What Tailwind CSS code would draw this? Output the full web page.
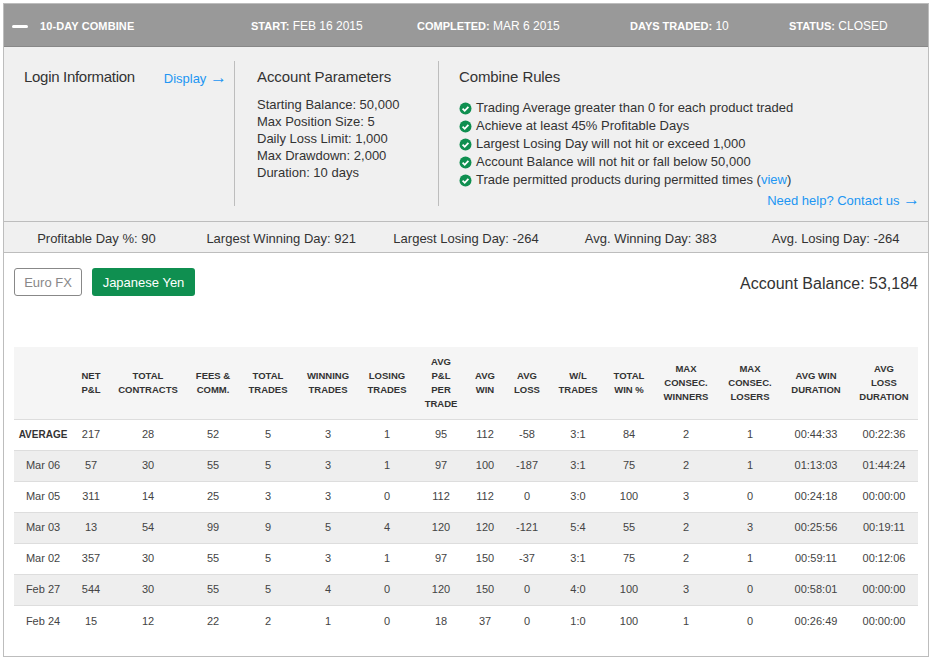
<!DOCTYPE html>
<html lang="en">
<head>
  <meta charset="UTF-8" />
  <title>10-Day Combine</title>
  <script src="https://cdn.jsdelivr.net/npm/@tailwindcss/browser@4"></script>
</head>
<body class="bg-white font-['Liberation_Sans',Arial,sans-serif] text-[#333]">
  <div class="ml-[3px] mt-[3px] w-[926px] h-[654px] border border-[#bdbdbd] box-border">

    <!-- header bar -->
    <div class="h-[43px] pt-[2px] bg-[#999] border-b border-[#888] flex items-center text-white text-[12px] box-border">
      <span class="ml-[8px] w-[16px] h-[3px] rounded-sm bg-white"></span>
      <b class="ml-[12px] w-[211px] text-[11px] tracking-[0.1px]">10-DAY COMBINE</b>
      <span class="w-[166px]"><b class="text-[11px]">START:</b> FEB 16 2015</span>
      <span class="w-[213px]"><b class="text-[11px]">COMPLETED:</b> MAR 6 2015</span>
      <span class="w-[159px]"><b class="text-[11px]">DAYS TRADED:</b> 10</span>
      <span><b class="text-[11px]">STATUS:</b> CLOSED</span>
    </div>

    <!-- info panel -->
    <div class="h-[175px] bg-[#f0f0f0] border-b border-[#bdbdbd] flex pt-[14px] box-border">
      <div class="w-[231px] h-[145px] border-r border-[#bdbdbd] pl-[20px] pr-[7px] flex justify-between items-start box-border">
        <h2 class="text-[15px] leading-[18px] mt-[7px] tracking-[-0.3px]">Login Information</h2>
        <a class="text-[13px] leading-[18px] mt-[8px] text-[#2196f3]">Display <span class="text-[17px] leading-none">→</span></a>
      </div>
      <div class="w-[204px] h-[145px] border-r border-[#bdbdbd] pl-[22px] box-border">
        <h2 class="text-[15px] leading-[18px] mt-[7px] mb-[10px] tracking-[-0.1px]">Account Parameters</h2>
        <div class="text-[13px] leading-[17px]">
          <p>Starting Balance: 50,000</p>
          <p>Max Position Size: 5</p>
          <p>Daily Loss Limit: 1,000</p>
          <p>Max Drawdown: 2,000</p>
          <p>Duration: 10 days</p>
        </div>
      </div>
      <div class="flex-1 pl-[20px] pr-[8px]">
        <h2 class="text-[15px] leading-[18px] mt-[7px] mb-[13px] tracking-[-0.1px]">Combine Rules</h2>
        <ul class="text-[13px] leading-[18px]">
          <li class="flex items-center gap-[4px]">
            <svg width="13" height="13" viewBox="0 0 13 13"><circle cx="6.5" cy="6.5" r="6" fill="#0f8f50"/><path d="M3.6 6.7l2.1 2.1 3.7-3.9" fill="none" stroke="#fff" stroke-width="1.8"/></svg>
            Trading Average greater than 0 for each product traded
          </li>
          <li class="flex items-center gap-[4px]">
            <svg width="13" height="13" viewBox="0 0 13 13"><circle cx="6.5" cy="6.5" r="6" fill="#0f8f50"/><path d="M3.6 6.7l2.1 2.1 3.7-3.9" fill="none" stroke="#fff" stroke-width="1.8"/></svg>
            Achieve at least 45% Profitable Days
          </li>
          <li class="flex items-center gap-[4px]">
            <svg width="13" height="13" viewBox="0 0 13 13"><circle cx="6.5" cy="6.5" r="6" fill="#0f8f50"/><path d="M3.6 6.7l2.1 2.1 3.7-3.9" fill="none" stroke="#fff" stroke-width="1.8"/></svg>
            Largest Losing Day will not hit or exceed 1,000
          </li>
          <li class="flex items-center gap-[4px]">
            <svg width="13" height="13" viewBox="0 0 13 13"><circle cx="6.5" cy="6.5" r="6" fill="#0f8f50"/><path d="M3.6 6.7l2.1 2.1 3.7-3.9" fill="none" stroke="#fff" stroke-width="1.8"/></svg>
            Account Balance will not hit or fall below 50,000
          </li>
          <li class="flex items-center gap-[4px]">
            <svg width="13" height="13" viewBox="0 0 13 13"><circle cx="6.5" cy="6.5" r="6" fill="#0f8f50"/><path d="M3.6 6.7l2.1 2.1 3.7-3.9" fill="none" stroke="#fff" stroke-width="1.8"/></svg>
            <span>Trade permitted products during permitted times (<a class="text-[#2196f3]">view</a>)</span>
          </li>
        </ul>
        <div class="text-right text-[13px] leading-[18px] mt-[2px] text-[#2196f3]"><a>Need help? Contact us <span class="text-[17px] leading-none">→</span></a></div>
      </div>
    </div>

    <!-- summary stats -->
    <div class="h-[31px] pt-[3px] bg-[#f0f0f0] border-b border-[#bdbdbd] grid grid-cols-5 items-center text-center text-[13px] box-border">
      <span>Profitable Day %: 90</span>
      <span>Largest Winning Day: 921</span>
      <span>Largest Losing Day: -264</span>
      <span>Avg. Winning Day: 383</span>
      <span>Avg. Losing Day: -264</span>
    </div>

    <!-- product tabs + balance -->
    <div class="flex items-center justify-between mt-[15px] px-[10px]">
      <div class="flex gap-[10px] text-[13px]">
        <button class="w-[68px] h-[28px] pt-[1px] border border-[#888] rounded-[3px] text-[#888]">Euro FX</button>
        <button class="w-[103px] h-[28px] pt-[1px] rounded-[3px] bg-[#0f8f50] text-white">Japanese Yen</button>
      </div>
      <div class="text-[16px] mt-[4px]">Account Balance: 53,184</div>
    </div>

    <!-- daily table -->
    <table class="mt-[51px] ml-[10px] w-[904px] table-fixed border-collapse text-center text-[11px] text-[#444]">
      <colgroup>
        <col class="w-[58px]"><col class="w-[38px]"><col class="w-[76px]"><col class="w-[54px]">
        <col class="w-[56px]"><col class="w-[64px]"><col class="w-[54px]"><col class="w-[54px]">
        <col class="w-[34px]"><col class="w-[50px]"><col class="w-[52px]"><col class="w-[50px]">
        <col class="w-[64px]"><col class="w-[64px]"><col class="w-[68px]"><col class="w-[68px]">
      </colgroup>
      <thead class="bg-[#f5f5f5] text-[9.5px] leading-[14px] font-bold text-[#333]">
        <tr class="h-[72px] border-b border-[#ddd]">
          <th></th><th>NET<br>P&amp;L</th><th>TOTAL<br>CONTRACTS</th><th>FEES &amp;<br>COMM.</th><th>TOTAL<br>TRADES</th><th>WINNING<br>TRADES</th><th>LOSING<br>TRADES</th><th>AVG<br>P&amp;L<br>PER<br>TRADE</th><th>AVG<br>WIN</th><th>AVG<br>LOSS</th><th>W/L<br>TRADES</th><th>TOTAL<br>WIN %</th><th>MAX<br>CONSEC.<br>WINNERS</th><th>MAX<br>CONSEC.<br>LOSERS</th><th>AVG WIN<br>DURATION</th><th>AVG<br>LOSS<br>DURATION</th>
        </tr>
      </thead>
      <tbody>
        <tr class="h-[31px] border-b border-[#ddd]"><td class="font-bold text-[10px] text-[#333]">AVERAGE</td><td>217</td><td>28</td><td>52</td><td>5</td><td>3</td><td>1</td><td>95</td><td>112</td><td>-58</td><td>3:1</td><td>84</td><td>2</td><td>1</td><td>00:44:33</td><td>00:22:36</td></tr>
        <tr class="h-[31px] border-b border-[#ddd] bg-[#eee]"><td>Mar 06</td><td>57</td><td>30</td><td>55</td><td>5</td><td>3</td><td>1</td><td>97</td><td>100</td><td>-187</td><td>3:1</td><td>75</td><td>2</td><td>1</td><td>01:13:03</td><td>01:44:24</td></tr>
        <tr class="h-[31px] border-b border-[#ddd]"><td>Mar 05</td><td>311</td><td>14</td><td>25</td><td>3</td><td>3</td><td>0</td><td>112</td><td>112</td><td>0</td><td>3:0</td><td>100</td><td>3</td><td>0</td><td>00:24:18</td><td>00:00:00</td></tr>
        <tr class="h-[31px] border-b border-[#ddd] bg-[#eee]"><td>Mar 03</td><td>13</td><td>54</td><td>99</td><td>9</td><td>5</td><td>4</td><td>120</td><td>120</td><td>-121</td><td>5:4</td><td>55</td><td>2</td><td>3</td><td>00:25:56</td><td>00:19:11</td></tr>
        <tr class="h-[31px] border-b border-[#ddd]"><td>Mar 02</td><td>357</td><td>30</td><td>55</td><td>5</td><td>3</td><td>1</td><td>97</td><td>150</td><td>-37</td><td>3:1</td><td>75</td><td>2</td><td>1</td><td>00:59:11</td><td>00:12:06</td></tr>
        <tr class="h-[31px] border-b border-[#ddd] bg-[#eee]"><td>Feb 27</td><td>544</td><td>30</td><td>55</td><td>5</td><td>4</td><td>0</td><td>120</td><td>150</td><td>0</td><td>4:0</td><td>100</td><td>3</td><td>0</td><td>00:58:01</td><td>00:00:00</td></tr>
        <tr class="h-[31px]"><td>Feb 24</td><td>15</td><td>12</td><td>22</td><td>2</td><td>1</td><td>0</td><td>18</td><td>37</td><td>0</td><td>1:0</td><td>100</td><td>1</td><td>0</td><td>00:26:49</td><td>00:00:00</td></tr>
      </tbody>
    </table>
  </div>
</body>
</html>
